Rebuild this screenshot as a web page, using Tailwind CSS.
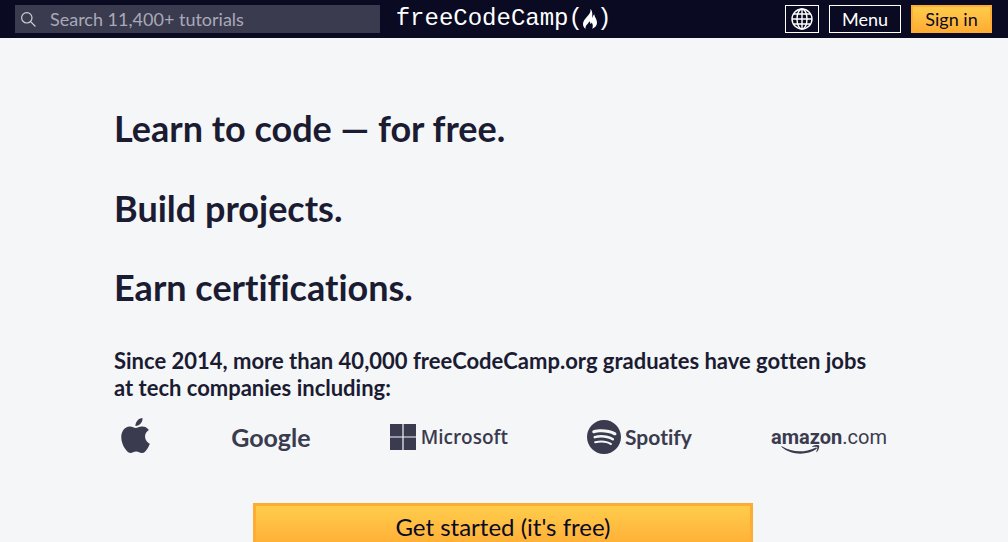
<!DOCTYPE html>
<html lang="en">
<head>
  <meta charset="UTF-8" />
  <meta name="viewport" content="width=device-width, initial-scale=1.0"/>
  <title>Learn to Code — For Free</title>
  <script src="https://cdn.jsdelivr.net/npm/@tailwindcss/browser@4"></script>
</head>
<body class="bg-[#f4f6f8] font-['Lato',sans-serif] [font-variant-ligatures:none] text-[#1b1b32] min-h-screen">
  <header class="bg-[#0a0a23] h-[38px] pl-[15px] pr-4 flex items-center gap-4">
    <form class="flex-1 flex items-center h-7 bg-[#3b3b4f] text-[#d0d0d5]" role="search">
      <label for="search" class="pl-[5px]" aria-label="Search">
        <svg class="size-4" viewBox="0 0 16 16" fill="none" stroke="currentColor" stroke-width="1.2" stroke-linecap="round">
          <circle cx="6.8" cy="6.8" r="5.2"/>
          <path d="M10.6 10.6 15 15"/>
        </svg>
      </label>
      <input id="search" type="search" placeholder="Search 11,400+ tutorials" class="flex-1 min-w-0 h-full pl-[14px] text-lg leading-7 bg-transparent placeholder:text-[#a9a9b8] outline-none"/>
    </form>

    <a href="#" class="flex items-center text-white font-['Liberation_Mono',monospace] text-2xl leading-7" aria-label="freeCodeCamp">
      <span>freeCodeCamp(</span>
      <svg class="w-4 h-5 -mx-px" viewBox="0 0 16 20" fill="currentColor">
        <path d="M8.300 0c.9 2.800-.8 4.800-2.900 7.200C3.100 9.800 1 12.200 1 15c0 2.100.9 3.700 2.600 4.800-.3-1.900.3-3.300 1.700-4.600 1-1 1.700-1.800 1.900-3 1 .9 1.300 1.800 1.100 2.900.8-.3 1.200-.9 1.400-1.600 1.300 2 1.500 4.200.4 6.300C13 18.600 15 16.500 15 13.700c0-2.400-1.200-4.100-2.100-5.900-.4-.9-.5-1.700-.4-2.500-1.300.8-1.900 2-1.700 3.600-.7-.7-.6-2-.5-3.300C10.400 3.300 9.900 1.300 8.300 0z"/>
      </svg>
      <span>)</span>
    </a>

    <nav class="flex-1 flex justify-end gap-[10px] text-lg leading-[26px]">
      <button type="button" class="w-[34px] h-7 border border-white text-white flex items-center justify-center" aria-label="Change language">
        <svg class="size-[22px]" viewBox="0 0 22 22" fill="none" stroke="currentColor" stroke-width="1.4">
          <circle cx="11" cy="11" r="10"/>
          <ellipse cx="11" cy="11" rx="5" ry="10"/>
          <path d="M11 1v20M1 11h20M2.400 6h17.200M2.400 16h17.200"/>
        </svg>
      </button>
      <button type="button" class="h-7 px-3 border border-white text-white">Menu</button>
      <a href="#" class="h-7 w-[81px] border-2 border-[#feac32] bg-linear-to-b from-[#fecc4c] to-[#ffac33] text-[#0a0a23] text-center leading-6">Sign in</a>
    </nav>
  </header>

  <main class="px-4 pr-[18px]">
    <div class="max-w-[778px] mx-auto pt-[70px]">
      <h1 class="text-4xl leading-10 font-bold">Learn to code — for free.</h1>
      <p class="mt-10 text-4xl leading-10 font-bold">Build projects.</p>
      <p class="mt-[39px] text-4xl leading-10 font-bold">Earn certifications.</p>
      <h2 class="mt-10 pr-2 text-[22px] leading-[27px] font-bold">Since 2014, more than 40,000 freeCodeCamp.org graduates have gotten jobs at tech companies including:</h2>

      <ul class="mt-[18px] px-[5px] h-9 flex items-center justify-between text-[#3b3b4f]">
        <li>
          <svg class="size-[35px] -mx-px mb-1" viewBox="0 0 24 24" fill="currentColor" role="img" aria-label="Apple">
            <path d="M12.152 6.896c-.948 0-2.415-1.078-3.960-1.040-2.040.027-3.910 1.183-4.961 3.014-2.117 3.675-.546 9.103 1.519 12.090 1.013 1.454 2.208 3.090 3.792 3.039 1.520-.065 2.090-.987 3.935-.987 1.831 0 2.350.987 3.960.948 1.637-.026 2.676-1.480 3.676-2.948 1.156-1.688 1.636-3.325 1.662-3.415-.039-.013-3.182-1.221-3.220-4.857-.026-3.040 2.480-4.494 2.597-4.559-1.429-2.090-3.623-2.324-4.390-2.376-2-.156-3.675 1.090-4.610 1.090zM15.530 3.830c.843-1.012 1.400-2.427 1.245-3.830-1.207.052-2.662.805-3.532 1.818-.780.896-1.454 2.338-1.273 3.714 1.338.104 2.715-.688 3.559-1.701"/>
          </svg>
        </li>
        <li class="text-[25px] leading-9 font-bold">Google</li>
        <li class="flex items-center gap-[5px] font-['Open_Sans',sans-serif] text-[19px] leading-9 font-semibold">
          <svg class="size-[26px]" viewBox="0 0 26 26" fill="currentColor" aria-hidden="true">
            <path d="M0 0h12.400v12.400H0zM13.600 0H26v12.400H13.600zM0 13.600h12.400V26H0zM13.600 13.600H26V26H13.600z"/>
          </svg>
          Microsoft
        </li>
        <li class="flex items-center gap-1 text-[21px] leading-9 font-bold">
          <svg class="size-[34px]" viewBox="0 0 24 24" fill="currentColor" aria-hidden="true">
            <path d="M12 0C5.400 0 0 5.400 0 12s5.400 12 12 12 12-5.400 12-12S18.660 0 12 0zm5.521 17.340c-.240.359-.660.480-1.021.240-2.820-1.740-6.360-2.101-10.561-1.141-.418.122-.779-.179-.899-.539-.120-.421.180-.780.540-.900 4.560-1.021 8.520-.600 11.640 1.320.420.180.479.659.301 1.020zm1.440-3.300c-.301.420-.841.600-1.262.300-3.239-1.980-8.159-2.580-11.939-1.380-.479.120-1.020-.120-1.140-.600-.120-.480.120-1.021.600-1.141C9.600 9.900 15 10.561 18.720 12.840c.361.181.540.780.241 1.200zm.120-3.360C15.240 8.400 8.820 8.160 5.160 9.301c-.600.179-1.200-.181-1.380-.721-.180-.601.180-1.200.720-1.381 4.260-1.260 11.280-1.020 15.721 1.621.539.300.719 1.020.419 1.560-.299.421-1.020.599-1.559.300z"/>
          </svg>
          Spotify
        </li>
        <li class="relative font-['Roboto',sans-serif] text-xl leading-9"><span class="font-bold">amazon</span>.com
          <svg class="absolute left-[10px] bottom-0 w-10 h-[10px]" viewBox="0 0 44 11" fill="currentColor" aria-hidden="true">
            <path d="M1 1.500c11 6.500 24 7.500 37 1.500 1.200-.5 2 .6 1 1.400C29 11.500 11 11.500.6 2.300c-.6-.6-.2-1.100.4-.8z"/>
            <path d="M34.500 1.500c2.500-1.700 6.600-1.700 7.300-.9.700.9-.2 5-2.300 7.100-.4.400-.8.200-.6-.3.800-1.800 1.400-4.300 1-4.900-.5-.6-3-.5-4.900-.3-.6 0-.9-.4-.5-.7z"/>
          </svg>
        </li>
      </ul>

      <a href="#" class="block max-w-[500px] mx-auto mt-12 pt-[3px] pb-1 border-3 border-[#feac32] bg-linear-to-b from-[#fecc4c] to-[#ffac33] text-center text-2xl leading-9 text-[#0a0a23]">Get started (it's free)</a>
    </div>
  </main>
</body>
</html>
